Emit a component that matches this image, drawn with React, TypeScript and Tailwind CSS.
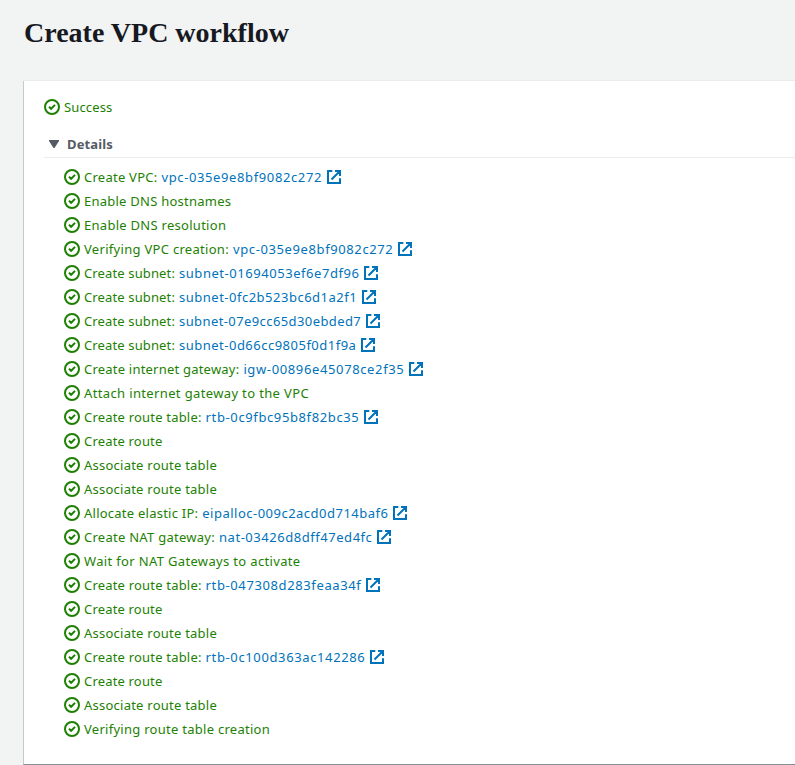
import { useLayoutEffect, useRef, useState } from 'react';

type Step = { label: string; width: number; link?: string; linkWidth?: number };

const steps: Step[] = [
  { label: 'Create VPC:', width: 73.5, link: 'vpc-035e9e8bf9082c272', linkWidth: 160.5 },
  { label: 'Enable DNS hostnames', width: 147.2 },
  { label: 'Enable DNS resolution', width: 142.2 },
  { label: 'Verifying VPC creation:', width: 145, link: 'vpc-035e9e8bf9082c272', linkWidth: 160.4 },
  { label: 'Create subnet:', width: 91, link: 'subnet-01694053ef6e7df96', linkWidth: 180.4 },
  { label: 'Create subnet:', width: 91, link: 'subnet-0fc2b523bc6d1a2f1', linkWidth: 178.2 },
  { label: 'Create subnet:', width: 91, link: 'subnet-07e9cc65d30ebded7', linkWidth: 182.2 },
  { label: 'Create subnet:', width: 91, link: 'subnet-0d66cc9805f0d1f9a', linkWidth: 177.4 },
  { label: 'Create internet gateway:', width: 155.4, link: 'igw-00896e45078ce2f35', linkWidth: 161 },
  { label: 'Attach internet gateway to the VPC', width: 225 },
  { label: 'Create route table:', width: 117.6, link: 'rtb-0c9fbc95b8f82bc35', linkWidth: 153.8 },
  { label: 'Create route', width: 78.5 },
  { label: 'Associate route table', width: 133 },
  { label: 'Associate route table', width: 133 },
  { label: 'Allocate elastic IP:', width: 114.3, link: 'eipalloc-009c2acd0d714baf6', linkWidth: 186.1 },
  { label: 'Create NAT gateway:', width: 131, link: 'nat-03426d8dff47ed4fc', linkWidth: 153.4 },
  { label: 'Wait for NAT Gateways to activate', width: 216.5 },
  { label: 'Create route table:', width: 117.6, link: 'rtb-047308d283feaa34f', linkWidth: 155.8 },
  { label: 'Create route', width: 78.5 },
  { label: 'Associate route table', width: 133 },
  { label: 'Create route table:', width: 117.6, link: 'rtb-0c100d363ac142286', linkWidth: 159.8 },
  { label: 'Create route', width: 78.5 },
  { label: 'Associate route table', width: 133 },
  { label: 'Verifying route table creation', width: 186 },
];

// Tracks a line of text so that it fills the given width.
function Tracked({ text, width }: { text: string; width: number }) {
  const ref = useRef<HTMLSpanElement>(null);
  const [spacing, setSpacing] = useState(0);
  useLayoutEffect(() => {
    if (ref.current) {
      setSpacing((width - ref.current.getBoundingClientRect().width) / text.length);
    }
  }, [text, width]);
  return (
    <span ref={ref} className="whitespace-nowrap" style={{ letterSpacing: `${spacing}px` }}>
      {text}
    </span>
  );
}

function SuccessIcon() {
  return (
    <svg className="size-4 shrink-0" viewBox="0 0 16 16" fill="none" stroke="#1d8102" strokeWidth="2">
      <circle cx="8" cy="8" r="7" />
      <path d="M5 7.7l2.1 2.1L11 5.9" />
    </svg>
  );
}

function ExternalIcon() {
  return (
    <svg className="size-4 shrink-0" viewBox="0 0 16 16" fill="none" stroke="#0073bb" strokeWidth="2">
      <path d="M9 2h5v5M5.5 10.5L14 2M14 9.2V14H2V2h4.3" />
    </svg>
  );
}

export default function App() {
  return (
    <div className="h-[765px] w-full overflow-hidden bg-[#f2f3f3] pl-[23px] font-['Noto_Sans',sans-serif] text-[13px] text-[#1d8102]">
      <h1 className="h-[81px] pl-px pt-[15px] font-['Liberation_Serif',serif] text-[28px] leading-9 font-bold text-[#16191f]">
        Create VPC workflow
      </h1>
      <main className="h-[684px] border-b border-l border-b-[#879196] border-l-[#c5cbcb] bg-white pt-[14px] pl-5 shadow-[0_-1px_0_#eaeded]">
        <div className="flex h-6 items-center gap-1 leading-6">
          <SuccessIcon />
          <Tracked text="Success" width={48.5} />
        </div>
        <div className="mt-[13px] flex h-[26px] items-center border-b border-[#eaeded] pb-px pl-[5px] font-bold text-[#545b64]">
          <svg className="h-2 w-[10px]" viewBox="0 0 10 8" fill="#545b64">
            <path d="M0 0h10v1L5.5 8h-1L0 1z" />
          </svg>
          <span className="ml-2 leading-6">
            <Tracked text="Details" width={46} />
          </span>
        </div>
        <ul className="mt-[7px] pl-5">
          {steps.map((s, i) => (
            <li key={i} className="flex h-6 items-center gap-1 leading-6 whitespace-nowrap">
              <SuccessIcon />
              <Tracked text={s.label} width={s.width} />
              {s.link && (
                <a className="flex items-center gap-1 text-[#0073bb]">
                  <Tracked text={s.link} width={s.linkWidth ?? 0} />
                  <ExternalIcon />
                </a>
              )}
            </li>
          ))}
        </ul>
      </main>
    </div>
  );
}
